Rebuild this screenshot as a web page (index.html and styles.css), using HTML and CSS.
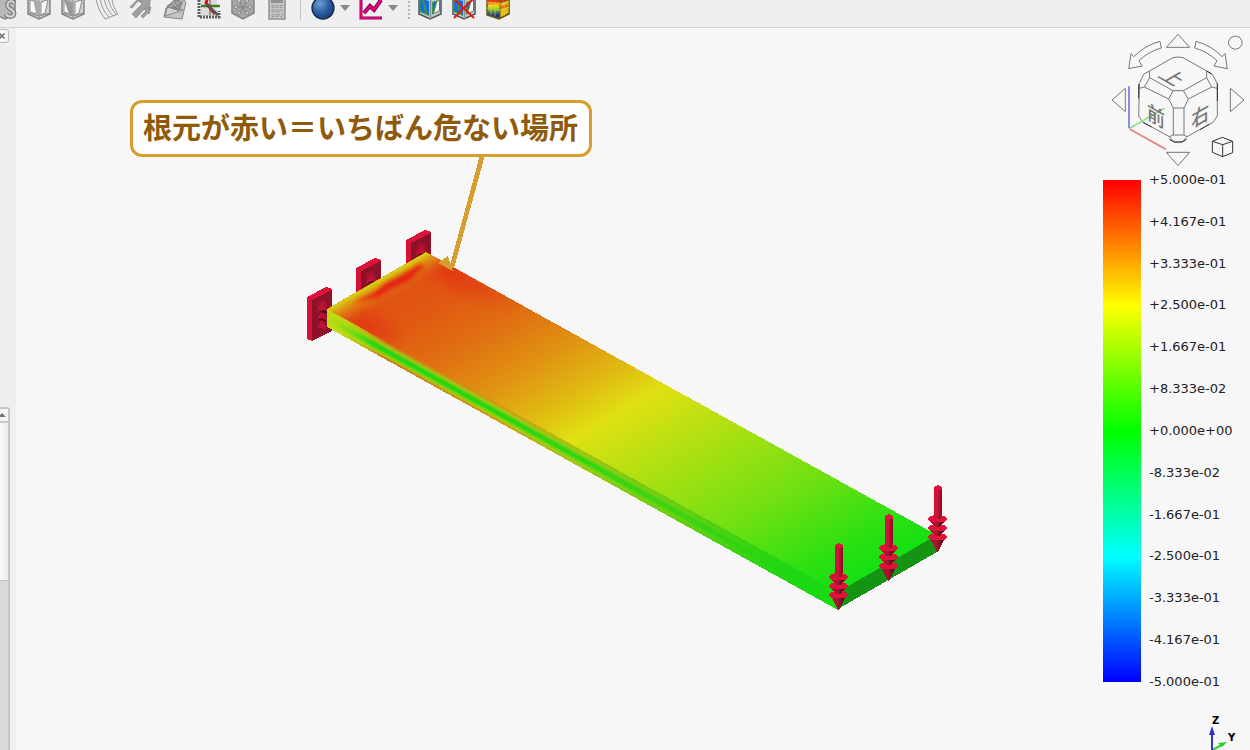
FILE: index.html
```html
<!DOCTYPE html>
<html lang="ja">
<head>
<meta charset="utf-8">
<title>FEM</title>
<link rel="stylesheet" href="styles.css">
</head>
<body>
<svg class="defs" aria-hidden="true">
  <defs>
    <symbol id="gray-cube" viewBox="0 0 24 24">
      <path d="M1 1 12 3 23 1V18L12 23 1 18Z" fill="#cfcfcf" stroke="#878787" stroke-width="1.5"/>
      <path d="M3 4 10 6V18L3 16Z" fill="#fafafa" stroke="#8d8d8d"/>
      <path d="M6 3 11 5V18L9 17Z" fill="#aaa"/>
      <path d="M14 6 21 4 18 17 14 19Z" fill="#f8f8f8" stroke="#8d8d8d"/>
      <path d="M12 3V23M1 17 12 20 23 17" stroke="#888" fill="none"/>
    </symbol>
    <symbol id="blue-cube" viewBox="0 0 24 24">
      <path d="M1 1 12 3 23 1V18L12 23 1 18Z" fill="#c3c8ca" stroke="#4e5555" stroke-width="1.5"/>
      <path d="M2 3 11 5V20L2 16Z" fill="#3c9440"/>
      <path d="M2.500 4 4 4 7 17 2.500 15ZM6 4 11 5V19L9.500 18Z" fill="#0f6cf0"/>
      <path d="M14.500 6.500 21.500 4.500V15L14.500 18Z" fill="#f6f6f6" stroke="#6b7272"/>
      <path d="M14.500 6.500 19 5 15.500 17 14.500 17.500Z" fill="#1b6be0" stroke="#3a9a3c"/>
      <path d="M12.500 4V23" stroke="#8a9293" stroke-width="1.4" fill="none"/>
    </symbol>
  </defs>
</svg>

<header class="toolbar">
  <button class="tool" aria-label="固体"><svg viewBox="0 0 24 24"><path d="M1 1 12 3 22 1V18L12 23 1 18Z" fill="#b8b8b8" stroke="#858585" stroke-width="1.5"/><path d="M21 7C19 3 13 6 15 11 17 14 22 14 21 18 20 22 14 21 13 18" fill="none" stroke="#777" stroke-width="4.500"/><path d="M21 7C19 3 13 6 15 11 17 14 22 14 21 18 20 22 14 21 13 18" fill="none" stroke="#d5d5d5" stroke-width="2.2"/></svg></button>
  <button class="tool" aria-label="要素"><svg><use href="#gray-cube"/></svg></button>
  <button class="tool" aria-label="断面"><svg viewBox="0 0 24 24"><use href="#gray-cube"/><path d="M3 4 12 7 12 20 8 18Z" fill="#999"/></svg></button>
  <button class="tool" aria-label="流れ"><svg viewBox="0 0 24 24"><path d="M1 2C2 10 5 16 10 23L23 18C19 12 17 7 17 1Z" fill="#eee" stroke="#969696"/><path d="M5 2C6 10 9 16 14 21M9 1C10 9 13 15 18 20M13 1C14 8 17 14 21 18" fill="none" stroke="#999"/></svg></button>
  <button class="tool" aria-label="ベクトル"><svg viewBox="0 0 24 24"><path d="M1 11 8 4 7 2 12 0 11 6 9 5 3 12ZM3 18 13 8 10 5 22 0 20 13 17 11 7 22ZM12 20 17 15 15 13 22 11 20 18 19 17 14 22Z" fill="#a0a0a0" stroke="#8a8a8a" stroke-width=".8"/></svg></button>
  <button class="tool" aria-label="等高面"><svg viewBox="0 0 24 24"><path d="M3 12 21 4 23 6 19 23 1 21Z" fill="#c4c4c4" stroke="#888"/><path d="M2 20 5 9 20 14Z" fill="#d3d3d3" stroke="#888"/><path d="M3 11 13 2 20 6 16 15Z" fill="#858585"/><path d="M6 11 13 5 17 10M10 7 15 12M8 11 18 5" fill="none" stroke="#c6c6c6" stroke-dasharray="2 1"/></svg></button>
  <button class="tool" aria-label="切断面"><svg viewBox="0 0 24 24"><path d="M4 1H20V20H4Z" fill="#dcdcdc"/><path d="M2 1V21H22V15" fill="none" stroke="#53605c" stroke-width="3" stroke-dasharray="2 1"/><path d="M13 1V20" stroke="#999" stroke-width="2"/><path d="M4 10H23" stroke="#407e18" stroke-width="2.5"/><path d="M11 1 9 7 18 18" stroke="#e20d19" stroke-width="3" fill="none"/><path d="M9 8 21 19" stroke="#505454" stroke-width="2.5"/></svg></button>
  <button class="tool" aria-label="節点"><svg viewBox="0 0 24 24"><path d="M1 2 12 0 23 2V17L12 23 1 17Z" fill="#a7a7a7" stroke="#858585" stroke-width="1.5"/><path d="M4 11H20M8 5 16 18M16 5 8 18" stroke="#808080"/><g fill="#c5c5c5" stroke="#808080" stroke-width=".8"><circle cx="5" cy="11" r="1.8"/><circle cx="19" cy="11" r="1.8"/><circle cx="8" cy="5" r="1.8"/><circle cx="16" cy="5" r="1.8"/><circle cx="8" cy="17" r="1.8"/><circle cx="16" cy="17" r="1.8"/></g></svg></button>
  <button class="tool" aria-label="計算"><svg viewBox="0 0 24 24"><path d="M4 0H20V23H4Z" fill="#c5c5c5" stroke="#929292" stroke-width="1.5"/><path d="M6 3H18V7H6Z" fill="#929292"/><g fill="#eee" stroke="#999"><path d="M7 9.500h2v2H7zM11 9.500h2v2h-2zM15 9.500h2v2h-2zM7 14h2v2H7zM11 14h2v2h-2zM7 18.500h2v2H7zM11 18.500h2v2h-2zM15 14h2v6.500h-2z"/></g></svg></button>
  <span class="separator"></span>
  <button class="tool" aria-label="フィルター"><svg viewBox="0 0 24 24"><defs><radialGradient id="ball" cx=".35" cy=".3" r=".75"><stop offset="0" stop-color="#6d9fd8"/><stop offset=".55" stop-color="#2d5f9f"/><stop offset="1" stop-color="#173f7c"/></radialGradient></defs><circle cx="12" cy="12" r="11" fill="url(#ball)" stroke="#142b49" stroke-width="1.3"/></svg></button>
  <button class="drop" aria-label="フィルター一覧"></button>
  <button class="tool chart" aria-label="グラフ"><svg viewBox="0 0 24 24"><path d="M2 0V22H23" fill="none" stroke="#8f0051" stroke-width="3"/><path d="M2 0V22H23" fill="none" stroke="#dd0078" stroke-width="2"/><path d="M5 17 11 10 15 14 22 4" fill="none" stroke="#760043" stroke-width="4"/><path d="M5 17 11 10 15 14 22 4" fill="none" stroke="#e9007e" stroke-width="2.2"/></svg></button>
  <button class="drop" aria-label="グラフ一覧"></button>
  <span class="handle"></span>
  <button class="tool" aria-label="結果表示"><svg><use href="#blue-cube"/></svg></button>
  <button class="tool" aria-label="結果消去"><svg viewBox="0 0 24 24"><use href="#blue-cube"/><path d="M1 2 22 22M22 2 2 22" stroke="#f20d0d" stroke-width="1.8"/></svg></button>
  <button class="tool" aria-label="結果パイプライン"><svg viewBox="0 0 24 24"><defs><linearGradient id="heat" x2="0" y2="1"><stop offset=".2" stop-color="#e83c18"/><stop offset=".4" stop-color="#f5dc18"/><stop offset=".6" stop-color="#6fb842"/><stop offset=".8" stop-color="#263a8a"/></linearGradient></defs><path d="M1 2 14 4 23 1V18L13 23 1 19Z" fill="url(#heat)" stroke="#6c5912" stroke-width="1.5"/><path d="M14 7 23 4V17L14 22Z" fill="#e5bc25" stroke="#715c13"/><path d="M15 10 22 8V11L15 13Z" fill="#e8641c"/><path d="M1 6 14 8 23 5M1 12 14 14 23 11M5 6V19M9 6V20M18 6V20" fill="none" stroke="#dfd12b" stroke-width=".7"/></svg></button>
</header>

<main class="workspace">
  <aside class="side">
    <button class="close" aria-label="閉じる"><svg viewBox="0 0 14 14"><path d="M4 4 10 10M10 4 4 10" stroke="#666" stroke-width="1.5"/></svg></button>
    <div class="scrollbar">
      <button class="scroll-up" aria-label="上へ"><svg viewBox="0 0 8 4"><path d="M0 4 4 0 8 4Z" fill="#777"/></svg></button>
      <div class="thumb"></div>
    </div>
  </aside>

  <section class="viewport">
    <svg class="scene" viewBox="16 28 1084 722" role="img" aria-label="片持ち梁の応力分布">
      <defs>
        <linearGradient id="top">
          <stop offset="0" stop-color="#e05012"/><stop offset=".1" stop-color="#e05812"/><stop offset=".2" stop-color="#e06f12"/><stop offset=".3" stop-color="#e09212"/><stop offset=".39" stop-color="#e0b812"/><stop offset=".47" stop-color="#e0e012"/><stop offset=".6" stop-color="#b0e012"/><stop offset=".78" stop-color="#70e012"/><stop offset=".93" stop-color="#2ae012"/><stop offset="1" stop-color="#15e012"/>
        </linearGradient>
        <linearGradient id="side">
          <stop offset="0" stop-color="#c6dc12"/><stop offset=".04" stop-color="#cfbd12"/><stop offset=".12" stop-color="#d36a12"/><stop offset=".3" stop-color="#d58b12"/><stop offset=".5" stop-color="#cdba12"/><stop offset=".7" stop-color="#87ce12"/><stop offset=".88" stop-color="#2bd412"/><stop offset="1" stop-color="#18da12"/>
        </linearGradient>
        <linearGradient id="core" x2="0" y2="1">
          <stop offset="0" stop-color="#b0c012" stop-opacity="0"/><stop offset=".25" stop-color="#a0d012" stop-opacity=".85"/><stop offset=".45" stop-color="#22d812"/><stop offset=".58" stop-color="#22d812"/><stop offset=".8" stop-color="#a0d812" stop-opacity=".85"/><stop offset="1" stop-color="#b0c012" stop-opacity="0"/>
        </linearGradient>
        <linearGradient id="tip">
          <stop offset=".35" stop-color="#5ccf12" stop-opacity="0"/><stop offset=".7" stop-color="#48d012" stop-opacity=".65"/><stop offset=".9" stop-color="#1ed612"/><stop offset="1" stop-color="#18dc12"/>
        </linearGradient>
        <linearGradient id="root">
          <stop offset="0" stop-color="#c4dc12"/><stop offset=".4" stop-color="#bcdc12" stop-opacity=".7"/><stop offset="1" stop-color="#b0dc12" stop-opacity="0"/>
        </linearGradient>
        <linearGradient id="edge">
          <stop offset="0" stop-color="#d4dc12"/><stop offset=".35" stop-color="#e0a012" stop-opacity=".75"/><stop offset="1" stop-color="#e06012" stop-opacity="0"/>
        </linearGradient>
        <radialGradient id="hot"><stop offset="0" stop-color="#e23512" stop-opacity=".85"/><stop offset=".4" stop-color="#e23d12" stop-opacity=".6"/><stop offset="1" stop-color="#e05012" stop-opacity="0"/></radialGradient>
        <linearGradient id="shaft"><stop offset="0" stop-color="#d20f35"/><stop offset=".4" stop-color="#d41238"/><stop offset="1" stop-color="#7b1023"/></linearGradient>
        <linearGradient id="cone"><stop offset="0" stop-color="#a81431"/><stop offset=".45" stop-color="#a81431"/><stop offset=".8" stop-color="#650e1e"/></linearGradient>
        <filter id="soft"><feGaussianBlur stdDeviation="2"/></filter>
        <clipPath id="face"><path d="M327 309 426 252 937 535 838 592Z"/></clipPath>
        <g id="support" shape-rendering="crispEdges">
          <path d="M307 297 326 287 332 289V331L312 341 307 339Z" fill="#dc1239"/>
          <path d="M312 300 332 290V331L312 341Z" fill="#8d1229"/>
          <path d="M307 298 312 300V341L307 339Z" fill="#d41136"/>
          <path d="M317 306 319 301 323 300 327 304V314L317 311Z" fill="#a4122e"/>
          <path d="M317 312 323 301 327 313ZM317 320 322 311 327 319ZM317 328 322 320 327 329Z" fill="#c01234"/>
          <path d="M317 312 324 310 327 313ZM317 320 322 318 327 321ZM319 330 327 328Z" fill="#4d0b18"/>
        </g>
        <g id="load" shape-rendering="crispEdges">
          <path d="M835 546H843V578H835Z" fill="url(#shaft)"/>
          <path d="M835 545 839 543 843 545V548H835Z" fill="#e0123a"/>
          <ellipse cx="838.5" cy="577" rx="9.500" ry="4" fill="#e0123a"/>
          <path d="M835 572H842V577H835Z" fill="url(#shaft)"/>
          <path d="M832 580H845L841 586H836Z" fill="url(#cone)"/>
          <ellipse cx="838.5" cy="586" rx="9.500" ry="4" fill="#e0123a"/>
          <path d="M834 580H843L841 585H836Z" fill="url(#cone)"/>
          <path d="M832 589H845L841 595H836Z" fill="url(#cone)"/>
          <ellipse cx="838.5" cy="595" rx="9.500" ry="4" fill="#e0123a"/>
          <path d="M834 589H843L841 594H836Z" fill="url(#cone)"/>
          <path d="M832 598H845L839 610H838Z" fill="url(#cone)"/>
        </g>
      </defs>

      <use href="#support"/>
      <use href="#support" x="49" y="-29"/>
      <use href="#support" x="99" y="-57"/>

      <g shape-rendering="crispEdges">
        <rect width="1" height="1" transform="matrix(511 283 99 -57 327 309)" fill="url(#top)"/>
        <rect width="1" height="1" transform="matrix(511 283 0 18 327 309)" fill="url(#side)"/>
        <rect width="1" height="1" transform="matrix(511 283 0 18 327 309)" fill="url(#core)"/>
        <rect width="1" height="1" transform="matrix(511 283 0 18 327 309)" fill="url(#tip)"/>
        <rect width=".09" height="1" transform="matrix(511 283 0 18 327 309)" fill="url(#root)"/>
        <path d="M838 592 937 535V552L838 609Z" fill="#149412"/>
      </g>
      <g clip-path="url(#face)">
        <ellipse cx="368" cy="326" rx="46" ry="26" transform="rotate(20 368 326)" fill="url(#hot)"/>
        <ellipse cx="452" cy="274" rx="80" ry="24" transform="rotate(26 452 274)" fill="url(#hot)"/>
        <rect width=".05" height="1" transform="matrix(511 283 99 -57 327 309)" fill="url(#edge)"/>
        <path d="M352 303 374 293 386 283 404 274 420 264 424 266 408 281 392 288 378 297Z" fill="#e41a12" filter="url(#soft)"/>
      </g>

      <use href="#load" x="99" y="-58"/>
      <use href="#load" x="50" y="-29"/>
      <use href="#load"/>

      <g fill="#d69e2e" shape-rendering="crispEdges">
        <path d="M480 155H485L454 268 449 269Z"/>
        <path d="M438 263 448 256 453 271Z"/>
      </g>
    </svg>
    <p class="callout">根元が赤い＝いちばん危ない場所</p>
  </section>

  <section class="gauges">
    <svg class="navcube" viewBox="0 9 450 432" role="img" aria-label="ナビゲーションキューブ">
      <g fill="none" stroke="#777" stroke-width="3" stroke-linejoin="round">
        <path d="M199 67 234 28 269 67ZM199 382 234 422 269 382ZM76 190V260L36 225ZM391 190V260L432 225Z"/>
        <path d="M180 49 184 69Q145 80 117 107L126 123 86 131 93 86 101 95Q135 61 180 49ZM288 49 284 69Q323 80 351 107L342 123 382 131 375 86 367 95Q333 61 288 49Z"/>
        <path d="M406 33 419 37 426 48V59L418 69 406 73 394 69 386 59V48L393 37Z"/>
        <path d="M148 138 219 98 234 96 249 98 320 138M148 138 149 158 219 197H250L320 158V138M118 190 133 186 149 158M118 190 116 273 129 292 208 335 222 351H246L261 335 339 292 352 273V190L335 186 320 158M133 186 206 222 220 249V330L208 335M335 186 265 222 252 249V330L261 335M206 222 219 197M265 222 250 197M220 249H252M220 330H252M148 138 131 148 118 176V190M320 138 337 148 352 176V190"/>
      </g>
      <path d="M116 178V220M352 175V228M320 138 335 147M129 292 155 306M300 314 328 298M208 343 222 351H246L260 343" fill="none" stroke="#333" stroke-width="3"/>
      <path d="M337 349 367 337 398 349V383L368 395 337 382ZM337 349 368 359 398 349M368 359V395" fill="none" stroke="#333" stroke-width="3"/>
      <path d="M89 310 194 250" stroke="#8be08b" stroke-width="5"/>
      <path d="M87 184V310" stroke="#8b8be2" stroke-width="6"/>
      <path d="M89 312 198 373" stroke="#e28b8b" stroke-width="6"/>
      <g class="face-label">
        <text transform="matrix(.87 .5 -.87 .5 221 156)">上</text>
        <text transform="matrix(.87 .5 0 1 168 269)">前</text>
        <text transform="matrix(.87 -.5 0 1 301 269)">右</text>
      </g>
    </svg>

    <div class="legend">
      <div class="ramp"></div>
      <ol class="ticks">
        <li>+5.000e-01</li><li>+4.167e-01</li><li>+3.333e-01</li><li>+2.500e-01</li><li>+1.667e-01</li><li>+8.333e-02</li><li>+0.000e+00</li><li>-8.333e-02</li><li>-1.667e-01</li><li>-2.500e-01</li><li>-3.333e-01</li><li>-4.167e-01</li><li>-5.000e-01</li>
      </ol>
    </div>

    <svg class="axes" viewBox="0 0 70 60" role="img" aria-label="座標軸">
      <path d="M32 60 44 54" stroke="#33cc33" stroke-width="2"/><path d="M47 52 38 53 42 57Z" fill="#33cc33"/>
      <path d="M32 45V60" stroke="#3333cc" stroke-width="2"/><path d="M32 36 35 45H29Z" fill="#3333cc"/>
      <text x="32" y="34">Z</text><text x="48" y="51">Y</text>
    </svg>
  </section>
</main>
</body>
</html>
```

FILE: styles.css
```css
* { box-sizing: border-box; }

body {
  margin: 0;
  height: 100vh;
  display: flex;
  flex-direction: column;
  overflow: hidden;
  background: #f7f7f7;
  font-family: "DejaVu Sans", "Noto Sans CJK JP", sans-serif;
}

button {
  padding: 0;
  border: 0;
  background: none;
}

.defs {
  position: absolute;
  width: 0;
  height: 0;
}

.toolbar {
  flex: none;
  height: 28px;
  display: flex;
  align-items: flex-end;
  padding-bottom: 7px;
  overflow: hidden;
  background: #efefef;
  border-bottom: 1px solid #d2d2d2;
}

.tool {
  flex: none;
  width: 34px;
  height: 24px;
}

.tool:first-child { margin-left: -12px; }

.tool svg {
  display: block;
  width: 24px;
  height: 24px;
  margin: 0 auto;
}

.separator {
  width: 1px;
  height: 24px;
  margin: 0 5px 0 6px;
  background: #c4c4c4;
}

.drop {
  width: 8px;
  height: 24px;
  display: grid;
  place-items: center;
}

.drop::before {
  content: "";
  border: 5px solid transparent;
  border-top: 6px solid #888;
  border-bottom: 0;
}

.chart { margin-left: 6px; }

.handle {
  width: 5px;
  height: 24px;
  margin: 0 1px 0 11px;
  background: radial-gradient(circle, #b4b4b4 1px, transparent 1px) 0 0 / 4px 4px;
}

.workspace {
  flex: 1;
  min-height: 0;
  display: flex;
}

.side {
  flex: none;
  width: 16px;
  display: flex;
  flex-direction: column;
  justify-content: space-between;
  background: #efefef;
}

.close {
  width: 14px;
  height: 14px;
  margin: 1px 0 0 -5px;
  border: 1px solid #bbb;
  border-radius: 3px;
  background: #f8f8f8;
}

.close svg {
  display: block;
  width: 12px;
  height: 12px;
}

.scrollbar {
  width: 10px;
  height: 343px;
  display: flex;
  flex-direction: column;
  border: 2px solid #c6c6c6;
  border-width: 2px 2px 0 0;
  border-top-right-radius: 3px;
  background: #dadada;
}

.scroll-up {
  height: 14px;
  background: #f6f6f6;
  border-bottom: 2px solid #c6c6c6;
}

.scroll-up svg {
  display: block;
  width: 8px;
  height: 4px;
  margin: 0 0 0 -2px;
}

.thumb {
  height: 158px;
  background: linear-gradient(90deg, #fafafa, #ececec);
  border-bottom: 1px solid #c0c0c0;
}

.viewport {
  position: relative;
  flex: 1;
  min-width: 0;
}

.scene {
  display: block;
  width: 100%;
  height: 100%;
}

.callout {
  position: absolute;
  left: 114px;
  top: 72px;
  margin: 0;
  padding: 3px 11px 7px 10px;
  border: 3px solid #d69e2e;
  border-radius: 12px;
  background: #fff;
  color: #8f5a0c;
  font: bold 29px/41px "Noto Sans CJK JP", sans-serif;
  white-space: nowrap;
}

.gauges {
  flex: none;
  width: 150px;
  display: flex;
  flex-direction: column;
}

.navcube {
  flex: none;
  width: 150px;
  height: 144px;
}

.face-label text {
  font: 500 62px "Noto Sans CJK JP", sans-serif;
  fill: #777;
  text-anchor: middle;
  dominant-baseline: central;
}

.legend {
  flex: 1;
  display: flex;
  gap: 8px;
  padding-left: 3px;
}

.ramp {
  width: 38px;
  margin: 8px 0;
  background: linear-gradient(#f00, #ff0 25%, #0f0 50%, #0ff 75%, #00f);
}

.ticks {
  display: flex;
  flex-direction: column;
  justify-content: space-between;
  margin: 0;
  padding: 0;
  list-style: none;
  color: #222;
  font-size: 13px;
  line-height: 16px;
}

.axes {
  flex: none;
  align-self: flex-end;
  width: 70px;
  height: 60px;
}

.axes text {
  font: bold 10px "DejaVu Sans", sans-serif;
}
```
